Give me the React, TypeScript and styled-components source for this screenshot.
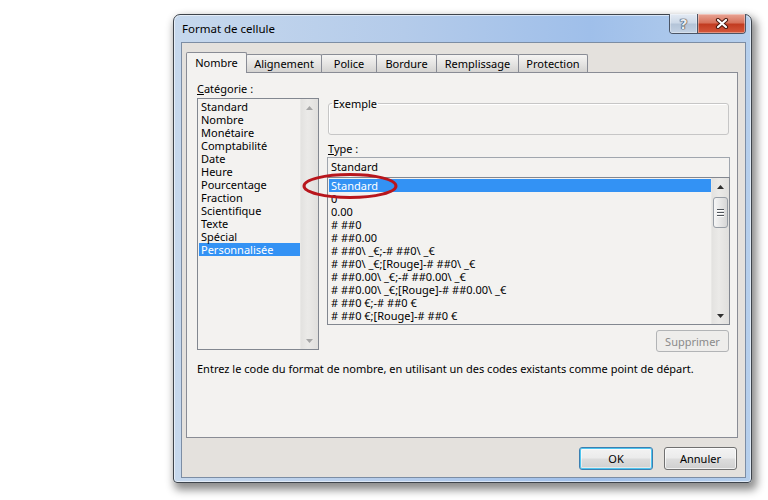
import React from "react";
import styled, { createGlobalStyle } from "styled-components";

const Global = createGlobalStyle`
  html, body { margin: 0; padding: 0; background: #ffffff; }
  body {
    font-family: "Noto Sans", "DejaVu Sans", sans-serif;
    font-size: 11px;
    color: #000;
  }
`;

const Stage = styled.div`
  width: 768px;
  height: 500px;
  box-sizing: border-box;
  padding: 14px 0 0 173px;
  background: #ffffff;
  overflow: hidden;
`;

const Window = styled.div`
  width: 579px;
  height: 469px;
  box-sizing: border-box;
  border: 1px solid #3e444c;
  border-radius: 7px 7px 4px 4px;
  background: linear-gradient(to right, #c6d8ed 0%, #b4cbea 40%, #9fbfea 72%, #b6cfec 100%);
  box-shadow: inset 0 0 0 1px rgba(255, 255, 255, 0.55), 3px 5px 9px 2px rgba(0, 0, 0, 0.45);
  display: flex;
  flex-direction: column;
  padding: 0 5px 4px 7px;
`;

const TitleBar = styled.div`
  height: 27px;
  display: flex;
  align-items: flex-start;
  justify-content: space-between;
`;

const Title = styled.div`
  padding: 6px 0 0 1px;
  font-size: 11.5px;
  line-height: 15px;
  color: #000;
`;

const CaptionGroup = styled.div`
  display: flex;
  margin-top: -1px;
  border: 1px solid #4b5566;
  border-top: none;
  border-radius: 0 0 4px 4px;
  overflow: hidden;
  height: 19px;
`;

const CaptionButton = styled.div<{ $close?: boolean; $w: number }>`
  width: ${(p) => p.$w}px;
  height: 19px;
  display: flex;
  align-items: center;
  justify-content: center;
  box-shadow: inset 0 0 0 1px rgba(255, 255, 255, 0.35);
  background: ${(p) =>
    p.$close
      ? "linear-gradient(#e9a596 0%, #d7735c 45%, #c23c21 55%, #d5583c 100%)"
      : "linear-gradient(#e4ebf4 0%, #cdd9e8 45%, #b4c4d8 55%, #c3d2e4 100%)"};
  & + & {
    border-left: 1px solid #4b5566;
  }
`;

const HelpGlyph = styled.span`
  font-family: "DejaVu Sans", sans-serif;
  font-weight: bold;
  font-size: 14px;
  line-height: 14px;
  color: #e8ecf1;
  text-shadow: 0 0 1px #2c3440, 0 0 1px #2c3440, 0 0 1px #2c3440;
`;

const Client = styled.div`
  flex: 1;
  display: flex;
  flex-direction: column;
  background: #e4e1dd;
  border: 1px solid #7c8da4;
  padding: 9px 8px 0 4px;
`;

const TabRow = styled.div`
  display: flex;
  align-items: flex-end;
  height: 20px;
`;

const Tab = styled.div<{ $w: number; $active?: boolean }>`
  box-sizing: border-box;
  width: ${(p) => p.$w}px;
  height: ${(p) => (p.$active ? 21 : 18)}px;
  margin-left: -1px;
  margin-bottom: ${(p) => (p.$active ? -1 : 0)}px;
  &:first-child {
    margin-left: 0;
  }
  border: 1px solid #898c95;
  border-bottom: none;
  border-radius: 2px 2px 0 0;
  background: ${(p) =>
    p.$active ? "#f3f2f0" : "linear-gradient(#f5f4f3 0%, #e6e5e3 50%, #d4d3d1 100%)"};
  display: flex;
  align-items: center;
  justify-content: center;
  padding-bottom: ${(p) => (p.$active ? 2 : 0)}px;
  position: relative;
  z-index: ${(p) => (p.$active ? 2 : 1)};
  line-height: 13px;
`;

const Panel = styled.div`
  box-sizing: border-box;
  width: 552px;
  height: 366px;
  border: 1px solid #898c95;
  background: #f3f2f0;
  padding: 9px 0 0 10px;
  display: flex;
  flex-direction: column;
`;

const Columns = styled.div`
  display: grid;
  grid-template-columns: 122px 403px;
  column-gap: 8px;
  height: 270px;
`;

const Column = styled.div<{ $top?: number }>`
  display: flex;
  flex-direction: column;
  padding-top: ${(p) => p.$top ?? 0}px;
`;

const Label = styled.div<{ $indent?: number }>`
  line-height: 13px;
  padding-left: ${(p) => p.$indent ?? 0}px;
`;

const ListBox = styled.div<{ $h: number }>`
  box-sizing: border-box;
  height: ${(p) => p.$h}px;
  border: 1px solid #828790;
  background: #f3f2f0;
  display: flex;
`;

const Items = styled.div`
  flex: 1;
  padding: 1px 0 0 1px;
  overflow: hidden;
`;

const Item = styled.div<{ $selected?: boolean }>`
  height: 13px;
  line-height: 13px;
  padding-left: 2px;
  white-space: nowrap;
  background: ${(p) => (p.$selected ? "#3392f4" : "transparent")};
  color: ${(p) => (p.$selected ? "#ffffff" : "#000000")};
`;

const ScrollBar = styled.div`
  width: 17px;
  display: flex;
  flex-direction: column;
  background: linear-gradient(to right, #e3e2e0, #ebeae8 40%, #e0dfdd);
  border-left: 1px solid #e9e8e6;
`;

const ArrowButton = styled.div`
  height: 17px;
  display: flex;
  align-items: center;
  justify-content: center;
`;

const Track = styled.div`
  flex: 1;
  padding-top: 2px;
`;

const Thumb = styled.div`
  box-sizing: border-box;
  height: 31px;
  margin: 0 1px;
  border: 1px solid #979da5;
  border-radius: 3px;
  background: linear-gradient(to right, #f6f6f6, #e6e6e6 50%, #d6d6d6);
  display: flex;
  flex-direction: column;
  align-items: center;
  justify-content: center;
  gap: 2px;
`;

const Grip = styled.div`
  width: 7px;
  height: 1px;
  background: #50555b;
  box-shadow: 0 1px 0 #ffffff;
`;

const Fieldset = styled.fieldset`
  box-sizing: border-box;
  height: 38px;
  margin: 0 1px;
  padding: 0 0 0 3px;
  border: 1px solid #c6c6c6;
  border-radius: 3px;
  box-shadow: inset 1px 1px 0 #ffffff;
`;

const Legend = styled.legend`
  padding: 0 1px;
  line-height: 13px;
`;

const TypeArea = styled.div`
  position: relative;
  display: flex;
  flex-direction: column;
`;

const TypeInput = styled.div`
  box-sizing: border-box;
  height: 20px;
  border: 1px solid #a0a6ae;
  border-bottom: none;
  background: #f3f2f0;
  padding: 2px 0 0 3px;
  line-height: 13px;
`;

const Ellipse = styled.svg`
  position: absolute;
  left: -26px;
  top: 15px;
  z-index: 3;
  pointer-events: none;
  overflow: visible;
`;

const ButtonRow = styled.div<{ $top: number; $gap?: number; $right?: number }>`
  display: flex;
  justify-content: flex-end;
  gap: ${(p) => p.$gap ?? 0}px;
  margin-top: ${(p) => p.$top}px;
  margin-right: ${(p) => p.$right ?? 0}px;
`;

const Button = styled.div<{ $w: number; $h?: number; $default?: boolean; $disabled?: boolean }>`
  box-sizing: border-box;
  width: ${(p) => p.$w}px;
  height: ${(p) => p.$h ?? 23}px;
  border-radius: 3px;
  display: flex;
  align-items: center;
  justify-content: center;
  line-height: 13px;
  border: 1px solid ${(p) => (p.$disabled ? "#b2b4b6" : p.$default ? "#3c7fb1" : "#707070")};
  color: ${(p) => (p.$disabled ? "#8a8a8a" : "#000")};
  background: ${(p) =>
    p.$disabled
      ? "#eeedeb"
      : "linear-gradient(#f3f3f3 0%, #ebebeb 48%, #dddddd 52%, #cfcfcf 100%)"};
  box-shadow: ${(p) =>
    p.$default
      ? "inset 0 0 0 1px #4fc5ef, inset 0 0 0 2px rgba(255,255,255,0.5)"
      : p.$disabled
      ? "none"
      : "inset 0 0 0 1px rgba(255,255,255,0.7)"};
`;

const Description = styled.div`
  margin-top: 10px;
  line-height: 13px;
  white-space: nowrap;
`;

const UpArrow = ({ color }: { color: string }) => (
  <svg width="7" height="4" viewBox="0 0 7 4">
    <path d="M0 4 L3.5 0 L7 4 Z" fill={color} />
  </svg>
);

const DownArrow = ({ color }: { color: string }) => (
  <svg width="7" height="4" viewBox="0 0 7 4">
    <path d="M0 0 L7 0 L3.5 4 Z" fill={color} />
  </svg>
);

const CloseGlyph = () => (
  <svg width="14" height="11" viewBox="0 0 14 11">
    <path d="M3 2 L11 9 M11 2 L3 9" stroke="#4a1a10" strokeWidth="4.2" strokeLinecap="round" />
    <path d="M3 2 L11 9 M11 2 L3 9" stroke="#ffffff" strokeWidth="2.2" strokeLinecap="round" />
  </svg>
);

const categories = [
  "Standard",
  "Nombre",
  "Monétaire",
  "Comptabilité",
  "Date",
  "Heure",
  "Pourcentage",
  "Fraction",
  "Scientifique",
  "Texte",
  "Spécial",
  "Personnalisée",
];

const formats = [
  "Standard",
  "0",
  "0.00",
  "# ##0",
  "# ##0.00",
  "# ##0\\ _€;-# ##0\\ _€",
  "# ##0\\ _€;[Rouge]-# ##0\\ _€",
  "# ##0.00\\ _€;-# ##0.00\\ _€",
  "# ##0.00\\ _€;[Rouge]-# ##0.00\\ _€",
  "# ##0 €;-# ##0 €",
  "# ##0 €;[Rouge]-# ##0 €",
];

const tabs = [
  { label: "Nombre", w: 61, active: true },
  { label: "Alignement", w: 76 },
  { label: "Police", w: 56 },
  { label: "Bordure", w: 61 },
  { label: "Remplissage", w: 83 },
  { label: "Protection", w: 70 },
];

export default function App() {
  return (
    <>
      <Global />
      <Stage>
        <Window>
          <TitleBar>
            <Title>Format de cellule</Title>
            <CaptionGroup>
              <CaptionButton $w={27}>
                <HelpGlyph>?</HelpGlyph>
              </CaptionButton>
              <CaptionButton $w={47} $close>
                <CloseGlyph />
              </CaptionButton>
            </CaptionGroup>
          </TitleBar>
          <Client>
            <TabRow>
              {tabs.map((t) => (
                <Tab key={t.label} $w={t.w} $active={t.active}>
                  {t.label}
                </Tab>
              ))}
            </TabRow>
            <Panel>
              <Columns>
                <Column>
                  <Label>
                    <u>C</u>atégorie :
                  </Label>
                  <ListBox $h={252} style={{ marginTop: 3 }}>
                    <Items>
                      {categories.map((c) => (
                        <Item key={c} $selected={c === "Personnalisée"}>
                          {c}
                        </Item>
                      ))}
                    </Items>
                    <ScrollBar>
                      <ArrowButton>
                        <UpArrow color="#a6a6a6" />
                      </ArrowButton>
                      <Track />
                      <ArrowButton>
                        <DownArrow color="#a6a6a6" />
                      </ArrowButton>
                    </ScrollBar>
                  </ListBox>
                </Column>
                <Column $top={15}>
                  <Fieldset>
                    <Legend>Exemple</Legend>
                  </Fieldset>
                  <Label $indent={1} style={{ marginTop: 7 }}>
                    <u>T</u>ype :
                  </Label>
                  <TypeArea style={{ marginTop: 2 }}>
                    <TypeInput>Standard</TypeInput>
                    <ListBox $h={148}>
                      <Items>
                        {formats.map((f, i) => (
                          <Item key={f} $selected={i === 0}>
                            {f}
                          </Item>
                        ))}
                      </Items>
                      <ScrollBar>
                        <ArrowButton>
                          <UpArrow color="#2f2f2f" />
                        </ArrowButton>
                        <Track>
                          <Thumb>
                            <Grip />
                            <Grip />
                            <Grip />
                          </Thumb>
                        </Track>
                        <ArrowButton>
                          <DownArrow color="#2f2f2f" />
                        </ArrowButton>
                      </ScrollBar>
                    </ListBox>
                    <Ellipse width="100" height="28" viewBox="0 0 100 28">
                      <defs>
                        <filter id="soft" x="-10%" y="-30%" width="120%" height="160%">
                          <feGaussianBlur stdDeviation="0.6" />
                        </filter>
                      </defs>
                      <ellipse
                        cx="49"
                        cy="14"
                        rx="46"
                        ry="11.5"
                        fill="none"
                        stroke="#b8161e"
                        strokeWidth="3"
                        filter="url(#soft)"
                      />
                    </Ellipse>
                  </TypeArea>
                  <ButtonRow $top={5} $right={1}>
                    <Button $w={73} $h={22} $disabled>
                      Supprimer
                    </Button>
                  </ButtonRow>
                </Column>
              </Columns>
              <Description>
                Entrez le code du format de nombre, en utilisant un des codes existants comme point de départ.
              </Description>
            </Panel>
            <ButtonRow $top={9} $gap={11}>
              <Button $w={74} $default>
                OK
              </Button>
              <Button $w={73}>Annuler</Button>
            </ButtonRow>
          </Client>
        </Window>
      </Stage>
    </>
  );
}
